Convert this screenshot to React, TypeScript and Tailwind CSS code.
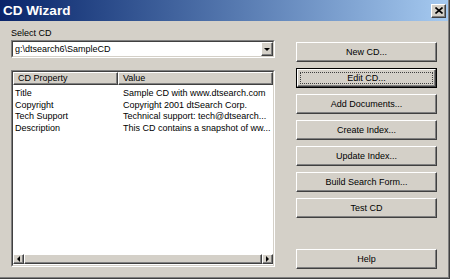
import React from 'react';

const raised =
  'border border-t-white border-l-white border-r-[#404040] border-b-[#404040] shadow-[inset_-1px_-1px_0_#808080]';
const sunken = 'border border-t-[#808080] border-l-[#808080] border-r-white border-b-white';
const sunkenInner = 'border border-t-[#404040] border-l-[#404040] border-r-[#d4d0c8] border-b-[#d4d0c8]';

const rows = [
  { prop: 'Title', value: 'Sample CD with www.dtsearch.com' },
  { prop: 'Copyright', value: 'Copyright 2001 dtSearch Corp.' },
  { prop: 'Tech Support', value: 'Technical support: tech@dtsearch...' },
  { prop: 'Description', value: 'This CD contains a snapshot of ww...' },
];

const buttons = ['New CD...', 'Edit CD...', 'Add Documents...', 'Create Index...', 'Update Index...', 'Build Search Form...', 'Test CD'];

const Arrow = ({ dir }: { dir: 'down' | 'left' | 'right' }) => {
  const pts = dir === 'down' ? '0,0 6,0 3,3' : dir === 'left' ? '3,0 3,6 0,3' : '0,0 0,6 3,3';
  const w = dir === 'down' ? 6 : 3;
  const h = dir === 'down' ? 3 : 6;
  return (
    <svg width={w} height={h} viewBox={`0 0 ${w} ${h}`}>
      <polygon points={pts} fill="#000" />
    </svg>
  );
};

const WinButton = ({ label, isDefault }: { label: string; isDefault?: boolean }) => {
  if (isDefault) {
    return (
      <div className="h-[20px] border border-black">
        <div className={`h-full ${raised} flex items-center justify-center p-[2px]`}>
          <div className="w-full h-full border border-dotted border-[#404040] flex items-center justify-center">
            {label}
          </div>
        </div>
      </div>
    );
  }
  return <div className={`h-[20px] ${raised} flex items-center justify-center`}>{label}</div>;
};

export default function App() {
  return (
    <div className="w-[450px] h-[279px] bg-[#d4d0c8] border-r border-b border-r-[#404040] border-b-[#404040] font-['Liberation_Sans',Arial,sans-serif] text-[9px] text-black leading-none">
      <div className="h-full flex flex-col border-r border-b border-r-[#808080] border-b-[#808080]">
        {/* title bar */}
        <div className="h-[21px] shrink-0 bg-gradient-to-r from-[#0a246a] to-[#a6caf0] flex items-center justify-between pl-[3px] pr-[2px]">
          <span className="text-white font-bold text-[13.5px]">CD Wizard</span>
          <div className={`w-[15px] h-[14px] bg-[#d4d0c8] ${raised} flex items-center justify-center`}>
            <svg width="8" height="7" viewBox="0 0 8 7">
              <path d="M0.5 0.5 L7.5 6.5 M7.5 0.5 L0.5 6.5" stroke="#000" strokeWidth="1.6" />
            </svg>
          </div>
        </div>

        <div className="flex flex-1 min-h-0">
          {/* left column */}
          <div className="w-[276px] pl-[11px] pt-[8px] flex flex-col">
            <div className="h-[11px]">Select CD</div>
            <div className={`h-[18px] w-[264px] ${sunken}`}>
              <div className={`h-full ${sunkenInner} bg-white flex items-center justify-between`}>
                <span className="pl-[2px]">g:\dtsearch6\SampleCD</span>
                <div className={`w-[12px] h-[14px] bg-[#d4d0c8] ${raised} flex items-center justify-center`}>
                  <Arrow dir="down" />
                </div>
              </div>
            </div>

            {/* list view */}
            <div className={`mt-[12px] h-[197px] w-[264px] ${sunken}`}>
              <div className={`h-full ${sunkenInner} bg-white flex flex-col`}>
                <div className="flex h-[13px] shrink-0">
                  <div className={`w-[105px] ${raised} bg-[#d4d0c8] flex items-center pl-[4px]`}>CD Property</div>
                  <div className={`flex-1 ${raised} bg-[#d4d0c8] flex items-center pl-[4px]`}>Value</div>
                </div>
                <div className="flex-1 pt-[3px]">
                  {rows.map(r => (
                    <div key={r.prop} className="flex h-[11.5px] items-center">
                      <span className="w-[105px] pl-[2px]">{r.prop}</span>
                      <span className="pl-[5px] whitespace-nowrap">{r.value}</span>
                    </div>
                  ))}
                </div>
                <div className="flex h-[10px] shrink-0 bg-[#e8e6e0] mb-[1px]">
                  <div className={`w-[11px] bg-[#d4d0c8] ${raised} flex items-center justify-center`}>
                    <Arrow dir="left" />
                  </div>
                  <div className={`flex-1 bg-[#d4d0c8] ${raised}`} />
                  <div className={`w-[11px] bg-[#d4d0c8] ${raised} flex items-center justify-center`}>
                    <Arrow dir="right" />
                  </div>
                </div>
              </div>
            </div>
          </div>

          {/* right column */}
          <div className="ml-[20px] w-[141px] pt-[21px] flex flex-col">
            <div className="flex flex-col gap-[6px]">
              {buttons.map(b => (
                <WinButton key={b} label={b} isDefault={b === 'Edit CD...'} />
              ))}
            </div>
            <div className="mt-[31px]">
              <WinButton label="Help" />
            </div>
          </div>
        </div>
      </div>
    </div>
  );
}
